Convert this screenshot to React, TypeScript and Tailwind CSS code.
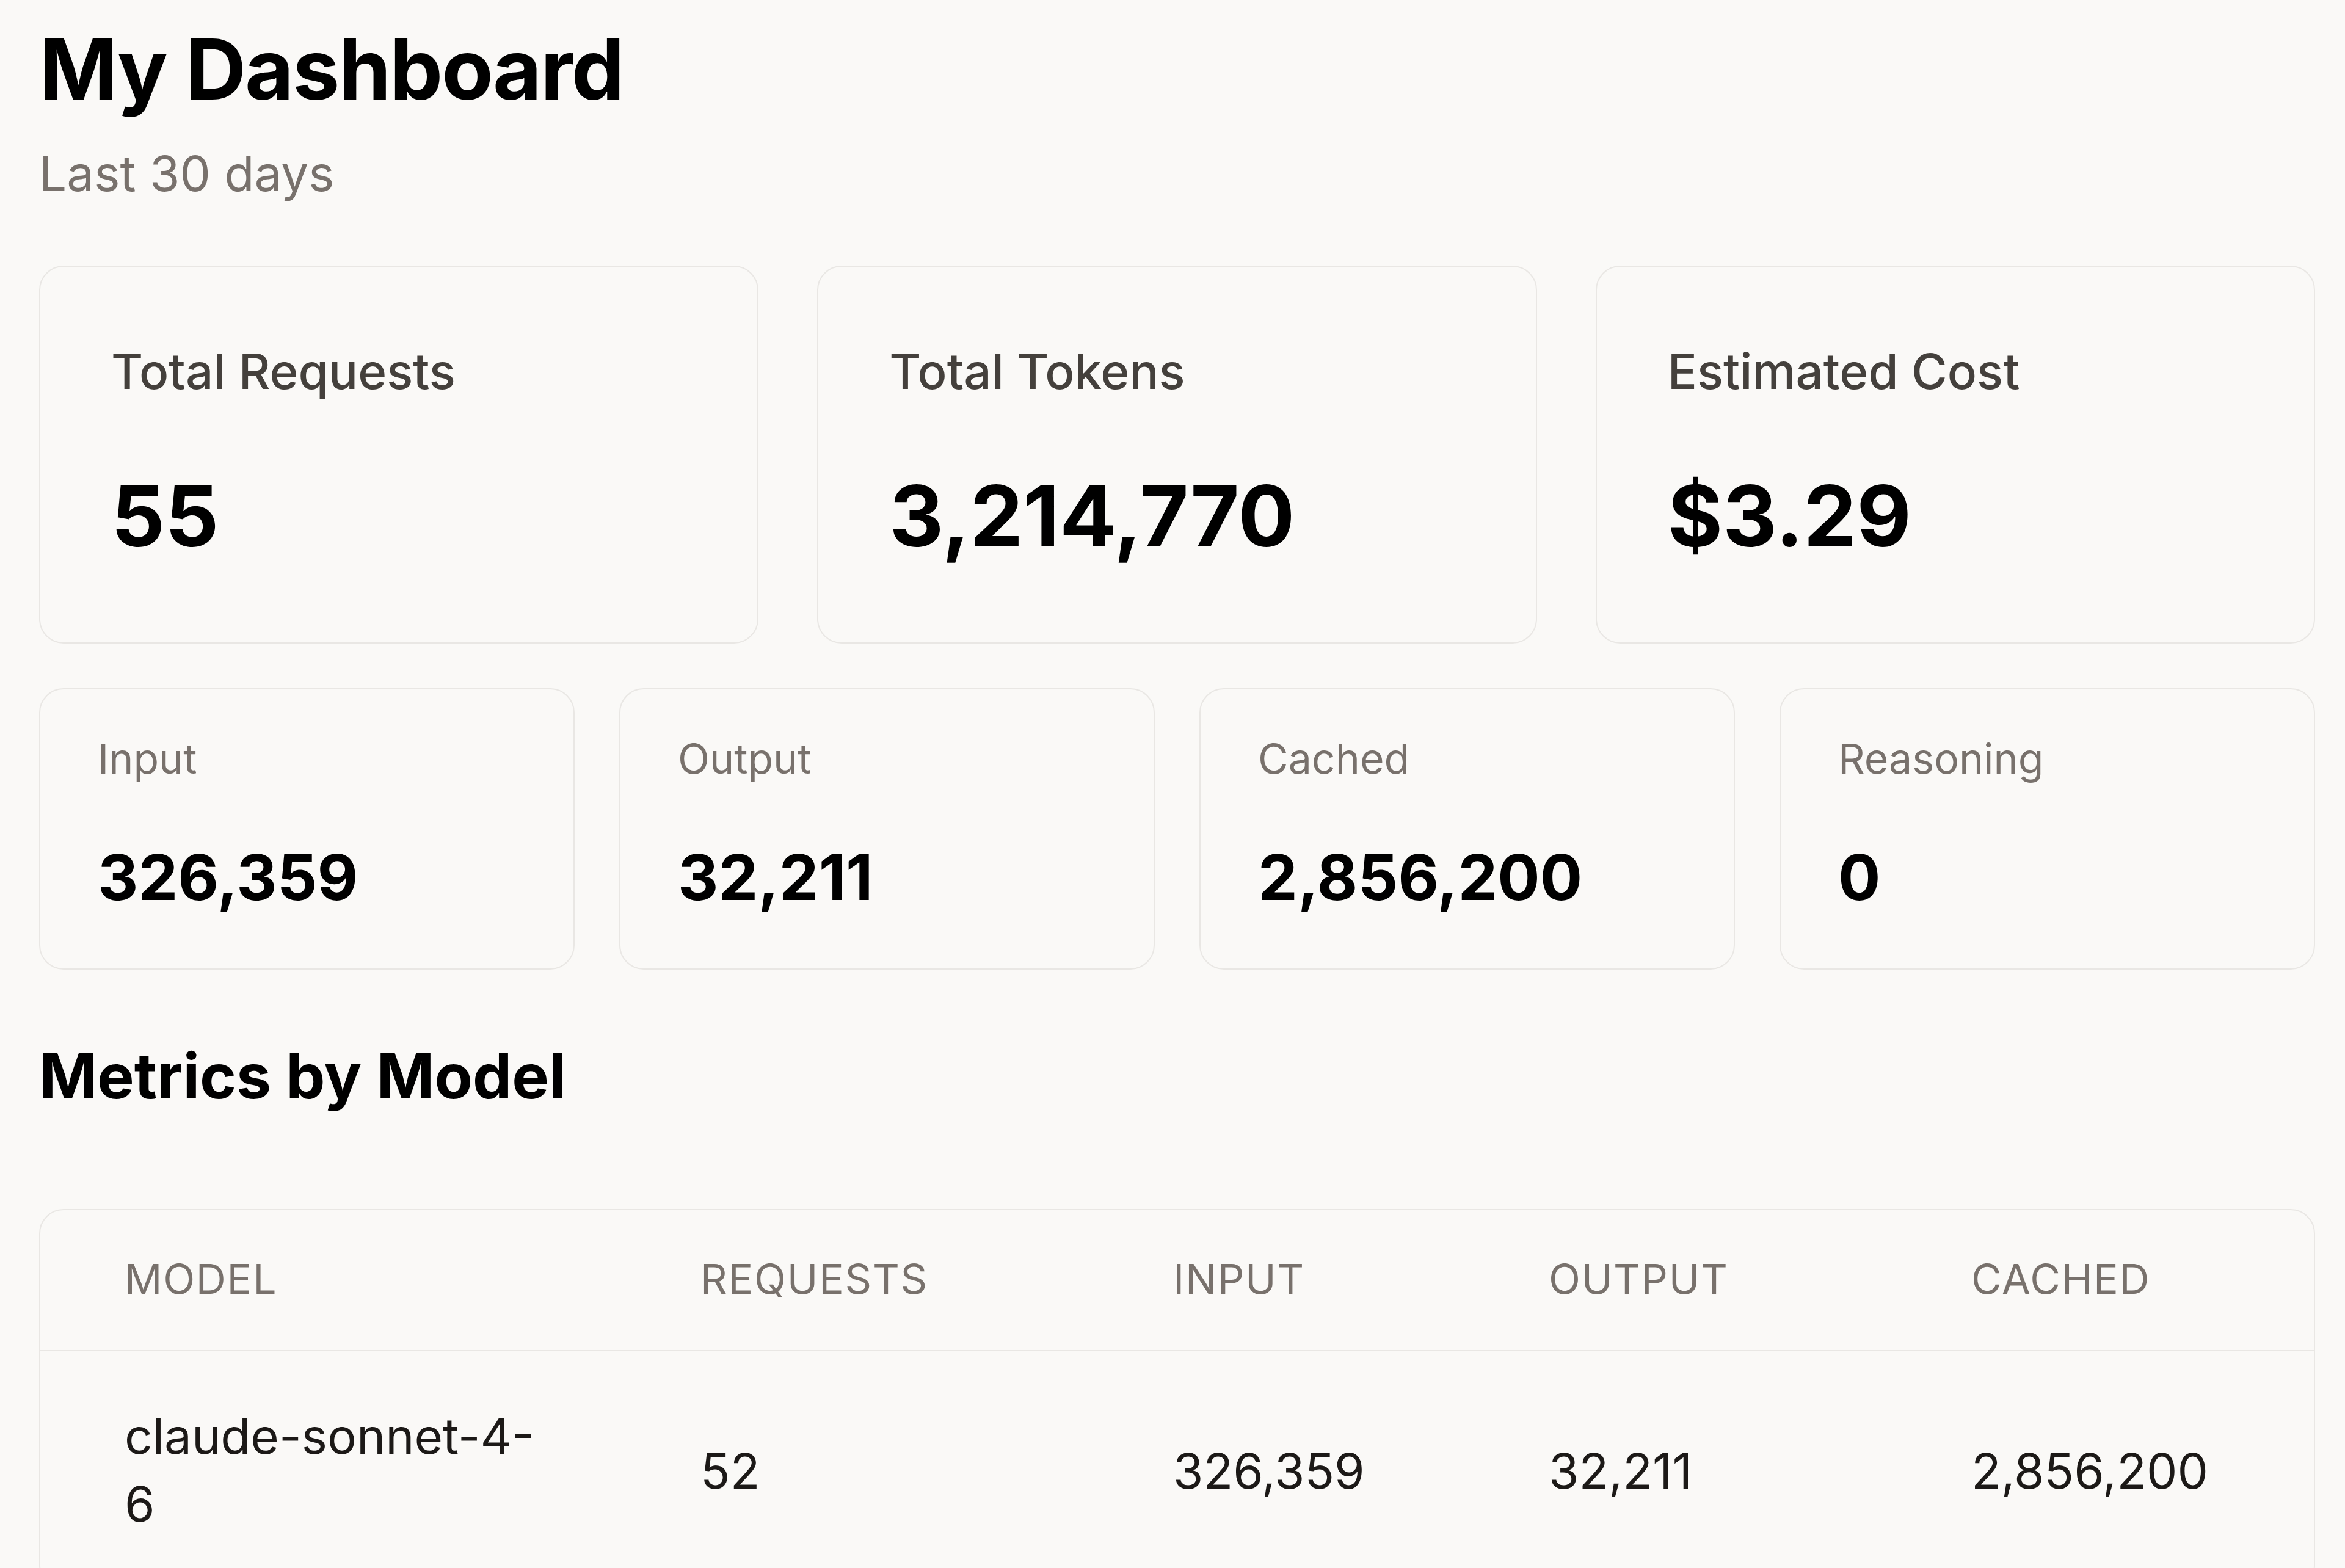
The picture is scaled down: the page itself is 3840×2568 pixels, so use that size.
import React from 'react';

const topStats = [
  { label: 'Total Requests', value: '55' },
  { label: 'Total Tokens', value: '3,214,770' },
  { label: 'Estimated Cost', value: '$3.29' },
];

const tokenStats = [
  { label: 'Input', value: '326,359' },
  { label: 'Output', value: '32,211' },
  { label: 'Cached', value: '2,856,200' },
  { label: 'Reasoning', value: '0' },
];

const columns = ['Model', 'Requests', 'Input', 'Output', 'Cached'];

const rows = [
  { model: 'claude-sonnet-4-6', requests: '52', input: '326,359', output: '32,211', cached: '2,856,200' },
];

export default function App() {
  return (
    <div
      className="min-h-screen bg-[#faf9f7] pl-[64px] pr-[49px] pt-[30px] pb-[120px] text-[#0a0a0a]"
      style={{ fontFamily: 'Inter, "Noto Sans", sans-serif' }}
    >
      {/* header */}
      <h1 className="text-[138px] leading-[166px] font-bold tracking-[-0.015em] text-black">My Dashboard</h1>
      <p className="mt-[28px] text-[80px] leading-[120px] text-[#78716c]">Last 30 days</p>

      {/* headline numbers */}
      <div className="mt-[91px] grid grid-cols-3 gap-[96px]">
        {topStats.map((s) => (
          <div
            key={s.label}
            className="rounded-[40px] border-2 border-[#e9e7e4] bg-[#faf9f7] pl-[116px] pt-[111px] pb-[124px]"
          >
            <div className="text-[80px] leading-[120px] font-medium text-[#44403c]">{s.label}</div>
            <div className="mt-[94px] text-[138px] leading-[166px] font-bold text-black">{s.value}</div>
          </div>
        ))}
      </div>

      {/* token breakdown */}
      <div className="mt-[73px] grid grid-cols-4 gap-[73px]">
        {tokenStats.map((s) => (
          <div
            key={s.label}
            className="rounded-[40px] border-2 border-[#e9e7e4] bg-[#faf9f7] pl-[94px] pt-[62px] pb-[87px]"
          >
            <div className="text-[68px] leading-[102px] text-[#78716c]">{s.label}</div>
            <div className="mt-[82px] text-[103px] leading-[124px] font-bold text-black">{s.value}</div>
          </div>
        ))}
      </div>

      <h2 className="mt-[113px] text-[102px] leading-[122px] font-bold text-black">Metrics by Model</h2>

      <div className="mt-[157px] overflow-hidden rounded-[40px] border-2 border-[#e9e7e4]">
        <table className="w-full table-fixed border-collapse text-left">
          <colgroup>
            <col className="w-[943px]" />
            <col className="w-[774px]" />
            <col className="w-[615px]" />
            <col className="w-[692px]" />
            <col />
          </colgroup>
          <thead>
            <tr className="border-b-2 border-[#e9e7e4]">
              {columns.map((c) => (
                <th
                  key={c}
                  className="pl-[138px] pt-[61px] pb-[66px] text-[68px] leading-[102px] font-normal uppercase tracking-wide text-[#78716c]"
                >
                  {c}
                </th>
              ))}
            </tr>
          </thead>
          <tbody>
            {rows.map((r) => (
              <tr key={r.model} className="text-[80px] leading-[111px] text-[#1c1917]">
                <td className="pl-[138px] pr-[115px] pt-[83px] pb-[85px] align-middle">{r.model}</td>
                <td className="pl-[138px] align-middle">{r.requests}</td>
                <td className="pl-[138px] align-middle">{r.input}</td>
                <td className="pl-[138px] align-middle">{r.output}</td>
                <td className="pl-[138px] align-middle">{r.cached}</td>
              </tr>
            ))}
          </tbody>
        </table>
      </div>
    </div>
  );
}
